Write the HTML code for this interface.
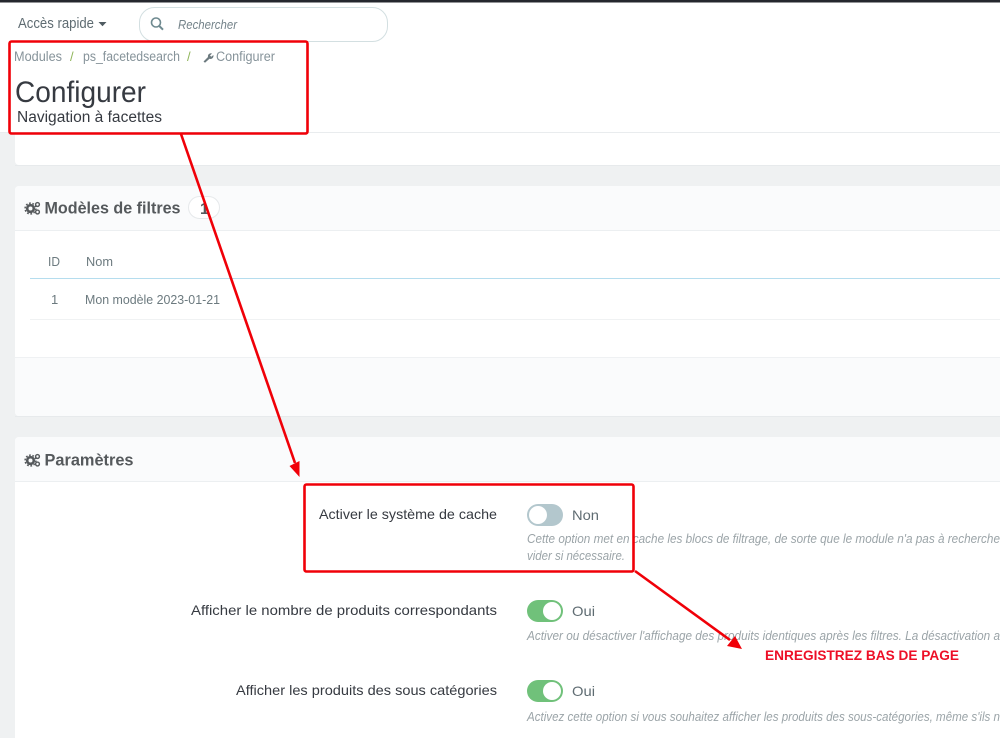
<!DOCTYPE html>
<html lang="fr"><head><meta charset="utf-8"><title>Configurer</title>
<style>
html,body{margin:0;padding:0;width:1000px;height:738px;overflow:hidden;background:#fff}
svg{display:block;font-family:"Liberation Sans",sans-serif;filter:blur(.35px)}
</style></head><body>
<svg width="1000" height="738" viewBox="0 0 1000 738" xmlns="http://www.w3.org/2000/svg">
<defs>
<g id="gears">
<circle cx="5.500" cy="7.500" r="3.300" fill="none" stroke="#55595c" stroke-width="2.600"/>
<circle cx="5.500" cy="7.500" r="5.400" fill="none" stroke="#55595c" stroke-width="1.500" stroke-dasharray="1.800 1.600"/>
<circle cx="12.500" cy="3.500" r="1.900" fill="none" stroke="#55595c" stroke-width="1.400"/>
<circle cx="12.500" cy="11" r="1.900" fill="none" stroke="#55595c" stroke-width="1.400"/>
</g>
</defs>
<rect width="1000" height="738" fill="#eff1f2"/>
<!-- header -->
<rect width="1000" height="132" fill="#fff"/>
<rect y="132" width="1000" height="1" fill="#e9ecee"/>
<rect width="1000" height="2.500" fill="#25272e"/>
<text x="18" y="28" font-size="15" fill="#5f6c72" textLength="76" lengthAdjust="spacingAndGlyphs">Accès rapide</text>
<path d="M98.500 22h8l-4 4.300z" fill="#4f5b61"/>
<rect x="139.500" y="7.500" width="248" height="34" rx="15" fill="#fff" stroke="#d3dfe1"/>
<circle cx="156" cy="22.500" r="4.500" fill="none" stroke="#6f8a90" stroke-width="1.600"/>
<path d="M159.300 26l3.700 3.700" stroke="#6f8a90" stroke-width="2"/>
<text x="178" y="29" font-size="13" font-style="italic" fill="#74838a" textLength="59" lengthAdjust="spacingAndGlyphs">Rechercher</text>
<text x="14" y="61" font-size="13.500" fill="#86939a" textLength="48" lengthAdjust="spacingAndGlyphs">Modules</text>
<text x="70" y="61" font-size="13" fill="#8fb55a">/</text>
<text x="83" y="61" font-size="13.500" fill="#86939a" textLength="97" lengthAdjust="spacingAndGlyphs">ps_facetedsearch</text>
<text x="187" y="61" font-size="13" fill="#8fb55a">/</text>
<path d="M203.500 61.500l4.500-4.500a3 3 0 0 1 4-3.500l-2 2 1.300 1.300 2-1.800a3 3 0 0 1-3.800 3.800l-4.500 4z" fill="#6c7a7f"/>
<text x="216" y="61" font-size="13.500" fill="#86939a" textLength="59" lengthAdjust="spacingAndGlyphs">Configurer</text>
<text x="15" y="102" font-size="30" fill="#363a41" textLength="131" lengthAdjust="spacingAndGlyphs">Configurer</text>
<text x="17" y="122" font-size="15.500" fill="#363a41" textLength="145" lengthAdjust="spacingAndGlyphs">Navigation à facettes</text>
<!-- panel 1 -->
<path d="M15 133H1000V165H19a4 4 0 0 1-4-4z" fill="#fff"/>
<rect x="15" y="165" width="985" height="1" fill="#e7eaec"/>
<!-- panel 2 -->
<rect x="15" y="186" width="990" height="230" rx="4" fill="#fff"/>
<path d="M15 190a4 4 0 0 1 4-4H1000V230H15z" fill="#fafbfc"/>
<rect x="15" y="230" width="985" height="1" fill="#eceff1"/>
<use href="#gears" x="25" y="201"/>
<text x="44.500" y="213.500" font-size="16.500" fill="#55595c" font-weight="bold" textLength="136" lengthAdjust="spacingAndGlyphs">Modèles de filtres</text>
<rect x="188.500" y="196.500" width="31" height="22" rx="11" fill="#fff" stroke="#e6e9eb"/>
<text x="200" y="214" font-size="16" fill="#55595c" font-weight="bold">1</text>
<text x="48" y="266" font-size="13" fill="#6c7a7f" textLength="12" lengthAdjust="spacingAndGlyphs">ID</text>
<text x="86" y="266" font-size="13" fill="#6c7a7f" textLength="27" lengthAdjust="spacingAndGlyphs">Nom</text>
<rect x="30" y="278" width="970" height="1" fill="#b5ddee"/>
<text x="51" y="304" font-size="13" fill="#6c7a7f">1</text>
<text x="85" y="304" font-size="13" fill="#6c7a7f" textLength="135" lengthAdjust="spacingAndGlyphs">Mon modèle 2023-01-21</text>
<rect x="30" y="319" width="970" height="1" fill="#f0f2f3"/>
<path d="M15 357H1000V416H19a4 4 0 0 1-4-4z" fill="#fafbfc"/>
<rect x="15" y="357" width="985" height="1" fill="#eff1f3"/>
<rect x="15" y="416" width="985" height="1" fill="#e7eaec"/>
<!-- panel 3 -->
<rect x="15" y="437" width="990" height="310" rx="4" fill="#fff"/>
<path d="M15 441a4 4 0 0 1 4-4H1000V481H15z" fill="#fafbfc"/>
<rect x="15" y="481" width="985" height="1" fill="#eceff1"/>
<use href="#gears" x="25" y="453"/>
<text x="44.500" y="465.500" font-size="16.500" fill="#55595c" font-weight="bold" textLength="89" lengthAdjust="spacingAndGlyphs">Paramètres</text>
<!-- settings -->
<text x="319" y="519" font-size="14" fill="#363a41" textLength="178" lengthAdjust="spacingAndGlyphs">Activer le système de cache</text>
<rect x="527" y="504" width="36" height="22" rx="11" fill="#b3c7cd"/>
<circle cx="538" cy="515" r="9" fill="#fff"/>
<text x="572" y="520" font-size="14" fill="#5f6c72" textLength="27" lengthAdjust="spacingAndGlyphs">Non</text>
<text x="527" y="543" font-size="12.500" font-style="italic" fill="#9ba4a8" textLength="473" lengthAdjust="spacingAndGlyphs">Cette option met en cache les blocs de filtrage, de sorte que le module n'a pas à recherche</text>
<text x="527" y="560" font-size="12.500" font-style="italic" fill="#9ba4a8" textLength="98" lengthAdjust="spacingAndGlyphs">vider si nécessaire.</text>
<text x="191" y="615" font-size="14" fill="#363a41" textLength="306" lengthAdjust="spacingAndGlyphs">Afficher le nombre de produits correspondants</text>
<rect x="527" y="600" width="36" height="22" rx="11" fill="#70c17a"/>
<circle cx="552" cy="611" r="9" fill="#fff"/>
<text x="572" y="616" font-size="14" fill="#5f6c72" textLength="23" lengthAdjust="spacingAndGlyphs">Oui</text>
<text x="527" y="640" font-size="12.500" font-style="italic" fill="#9ba4a8" textLength="473" lengthAdjust="spacingAndGlyphs">Activer ou désactiver l'affichage des produits identiques après les filtres. La désactivation a</text>
<text x="236" y="695" font-size="14" fill="#363a41" textLength="261" lengthAdjust="spacingAndGlyphs">Afficher les produits des sous catégories</text>
<rect x="527" y="680" width="36" height="22" rx="11" fill="#70c17a"/>
<circle cx="552" cy="691" r="9" fill="#fff"/>
<text x="572" y="696" font-size="14" fill="#5f6c72" textLength="23" lengthAdjust="spacingAndGlyphs">Oui</text>
<text x="527" y="721" font-size="12.500" font-style="italic" fill="#9ba4a8" textLength="473" lengthAdjust="spacingAndGlyphs">Activez cette option si vous souhaitez afficher les produits des sous-catégories, même s'ils n</text>
<!-- annotations -->
<g fill="none" stroke="#f00008" stroke-width="2.600" stroke-linejoin="round">
<rect x="9.500" y="41.500" width="298" height="92" rx="2"/>
<rect x="304.500" y="484.500" width="329" height="87" rx="2"/>
<path d="M181 134L295 463"/>
<path d="M635 571L730 640"/>
</g>
<path d="M299.500 477L289.500 466L299.500 461Z" fill="#f00008"/>
<path d="M742 649L727 646L735 636Z" fill="#f00008"/>
<text x="765" y="660" font-size="13.500" font-weight="bold" fill="#ed0f27" textLength="194" lengthAdjust="spacingAndGlyphs">ENREGISTREZ BAS DE PAGE</text>
</svg>
</body></html>
